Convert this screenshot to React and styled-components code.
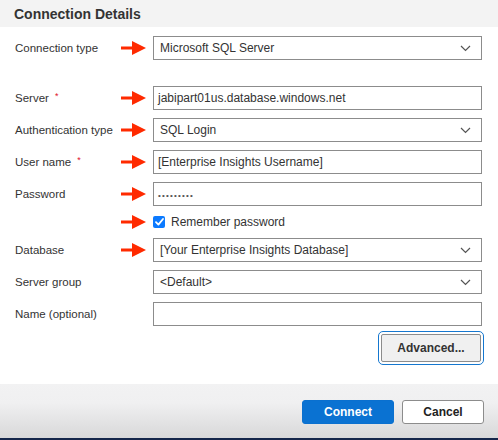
import React from 'react'
import styled, { createGlobalStyle } from 'styled-components'

const Global = createGlobalStyle`
  html, body {
    margin: 0;
    padding: 0;
    background: #fff;
  }
  body {
    font-family: "Liberation Sans", Arial, sans-serif;
    color: #333;
  }
`

const Page = styled.div`
  width: 498px;
  height: 440px;
  display: flex;
  flex-direction: column;
  overflow: hidden;
`

const Header = styled.div`
  height: 27px;
  background: #f3f3f3;
  padding-left: 14px;
  display: flex;
  align-items: center;
  font-size: 14px;
  font-weight: bold;
  color: #333;
`

const Form = styled.div`
  display: flex;
  flex-direction: column;
  gap: 8px;
  padding: 9px 16px 0 15px;
`

const Row = styled.div`
  display: grid;
  grid-template-columns: 106px 32px 1fr;
  align-items: center;
  margin-bottom: ${p => (p.$spaced ? '18px' : '0')};
`

const Label = styled.div`
  font-size: 11.5px;
  color: #333;
  white-space: nowrap;
  display: flex;
  align-items: center;
`

const Required = styled.span`
  color: #e0102a;
  font-size: 9px;
  margin-left: 6px;
  position: relative;
  top: -2px;
`

const ArrowCell = styled.div`
  display: flex;
  align-items: center;
  height: 14px;
`

const Field = styled.div`
  box-sizing: border-box;
  height: 24px;
  border: 1px solid #8c8c8c;
  background: #fff;
  display: flex;
  align-items: center;
  justify-content: space-between;
  padding: 0 10px 0 ${p => (p.$select ? '6px' : '4px')};
  font-size: 12px;
  color: #333;
`

const Dots = styled.span`
  font-size: 8px;
  letter-spacing: 1.2px;
  color: #555;
`

const CheckRow = styled.label`
  display: flex;
  align-items: center;
  gap: 6px;
  height: 16px;
  font-size: 12px;
  color: #333;
`

const Box = styled.span`
  width: 12px;
  height: 12px;
  border-radius: 2px;
  background: #0b7aff;
  display: flex;
  align-items: center;
  justify-content: center;
`

const AdvancedWrap = styled.div`
  grid-column: 3;
  display: flex;
  justify-content: flex-end;
`

const AdvancedButton = styled.button`
  box-sizing: border-box;
  width: 100px;
  height: 28px;
  margin-right: 1px;
  border: 1px solid #8c8c8c;
  border-radius: 2px;
  background: #f0f0f0;
  font-family: "Liberation Sans", Arial, sans-serif;
  font-size: 12px;
  font-weight: bold;
  color: #333;
  outline: 1px solid #1577cf;
  outline-offset: 2px;
  padding: 0;
`

const Footer = styled.div`
  margin-top: auto;
  box-sizing: border-box;
  height: 56px;
  background: linear-gradient(#f2f2f3 0%, #f0f0f1 35%, #d8d8d9 100%);
  border-bottom: 2px solid #15264a;
  display: flex;
  justify-content: flex-end;
  align-items: flex-start;
  gap: 8px;
  padding: 16px 14px 0 0;
`

const FooterButton = styled.button`
  box-sizing: border-box;
  width: ${p => p.$w}px;
  height: 24px;
  border-radius: 3px;
  padding: 0;
  font-family: "Liberation Sans", Arial, sans-serif;
  font-size: 12px;
  font-weight: bold;
  border: 1px solid ${p => (p.$primary ? '#0a70cf' : '#8c8c8c')};
  background: ${p => (p.$primary ? '#0a72d2' : '#fff')};
  color: ${p => (p.$primary ? '#fff' : '#222')};
`

const Arrow = () => (
  <svg width="25" height="14" viewBox="0 0 25 14">
    <rect x="0" y="5.5" width="12" height="3" fill="#ff2a00" />
    <polygon points="11,0 25,7 11,14" fill="#ff2a00" />
  </svg>
)

const Chevron = () => (
  <svg width="11" height="7" viewBox="0 0 11 7">
    <polyline points="1,1 5.5,5.5 10,1" fill="none" stroke="#555" strokeWidth="1.2" />
  </svg>
)

const Check = () => (
  <svg width="9" height="8" viewBox="0 0 9 8">
    <polyline points="1,4.2 3.4,6.6 8,1" fill="none" stroke="#fff" strokeWidth="1.8" strokeLinecap="round" strokeLinejoin="round" />
  </svg>
)

const FormRow = ({ label, required, arrow, select, spaced, children }) => (
  <Row $spaced={spaced}>
    <Label>
      {label}
      {required && <Required>*</Required>}
    </Label>
    <ArrowCell>{arrow && <Arrow />}</ArrowCell>
    <Field $select={select}>
      <span>{children}</span>
      {select && <Chevron />}
    </Field>
  </Row>
)

export default function App() {
  return (
    <Page>
      <Global />
      <Header>Connection Details</Header>
      <Form>
        <FormRow label="Connection type" arrow select spaced>Microsoft SQL Server</FormRow>
        <FormRow label="Server" required arrow>jabipart01us.database.windows.net</FormRow>
        <FormRow label="Authentication type" arrow select>SQL Login</FormRow>
        <FormRow label="User name" required arrow>[Enterprise Insights Username]</FormRow>
        <FormRow label="Password" arrow><Dots>•••••••••</Dots></FormRow>
        <Row>
          <Label />
          <ArrowCell><Arrow /></ArrowCell>
          <CheckRow>
            <Box><Check /></Box>
            Remember password
          </CheckRow>
        </Row>
        <FormRow label="Database" arrow select>[Your Enterprise Insights Database]</FormRow>
        <FormRow label="Server group" select>&lt;Default&gt;</FormRow>
        <FormRow label="Name (optional)"></FormRow>
        <Row>
          <AdvancedWrap>
            <AdvancedButton>Advanced...</AdvancedButton>
          </AdvancedWrap>
        </Row>
      </Form>
      <Footer>
        <FooterButton $primary $w={92}>Connect</FooterButton>
        <FooterButton $w={82}>Cancel</FooterButton>
      </Footer>
    </Page>
  )
}
